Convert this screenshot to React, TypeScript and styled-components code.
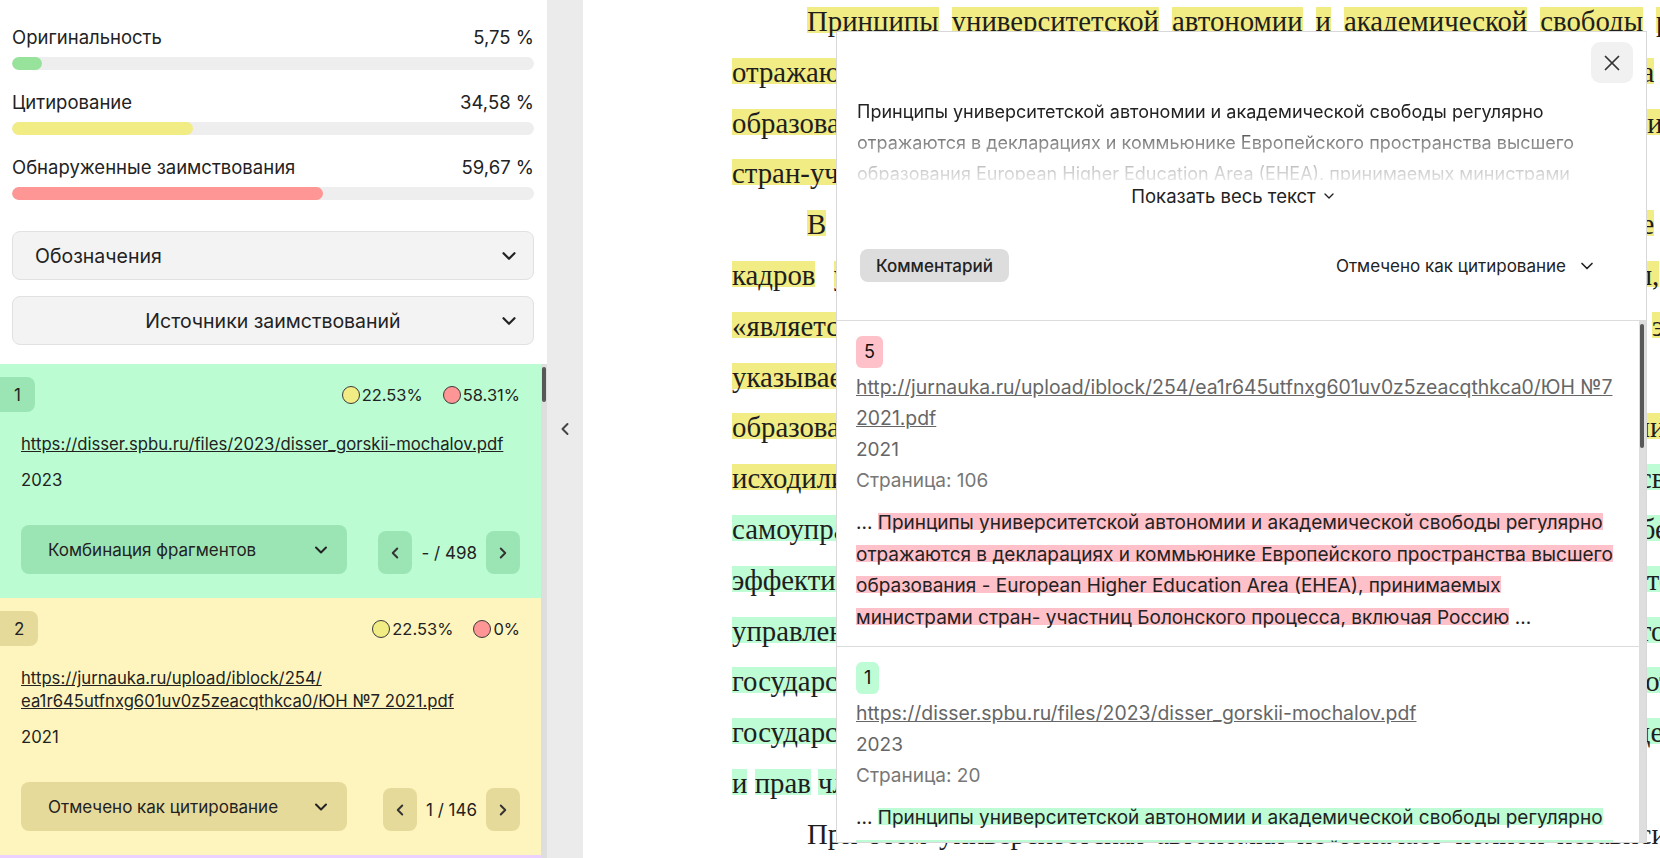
import React from "react";
import styled, { createGlobalStyle } from "styled-components";
import { ChevronDown, ChevronLeft, ChevronRight, X } from "lucide-react";

const GlobalStyle = createGlobalStyle`
  * { box-sizing: border-box; }
  html, body { margin: 0; padding: 0; }
  body {
    font-family: Inter, "Noto Sans", sans-serif;
    color: #222;
    background: #fff;
    overflow: hidden;
  }
`;

const colors = {
  yellow: "#f2ec84",
  green: "#bdfcd4",
  pink: "#ffc1c9",
  red: "#ff9696",
  greenBar: "#98e39b",
};

const Page = styled.div`
  display: flex;
  width: 1660px;
  height: 858px;
  overflow: hidden;
`;

/* ---------- sidebar ---------- */

const Sidebar = styled.aside`
  width: 547px;
  flex: none;
  display: flex;
  flex-direction: column;
  background: #fff;
`;

const Summary = styled.div`
  padding: 25px 13px 0 12px;
`;

const Stats = styled.div`
  display: flex;
  flex-direction: column;
  gap: 20px;
`;

const StatHead = styled.div`
  display: flex;
  justify-content: space-between;
  font-size: 18.5px;
  line-height: 24px;
  margin-bottom: 8px;
`;

const Track = styled.div`
  height: 13px;
  border-radius: 7px;
  background: #eeeeee;
  overflow: hidden;
`;

const Fill = styled.div<{ $color: string }>`
  height: 100%;
  border-radius: 7px;
  background: ${(p) => p.$color};
`;

const Select = styled.div<{ $center?: boolean; $gap: number }>`
  height: 49px;
  margin-top: ${(p) => p.$gap}px;
  display: flex;
  align-items: center;
  border: 1px solid #e1e1e1;
  border-radius: 8px;
  background: #f3f3f3;
  padding: ${(p) => (p.$center ? "0 13px 0 35px" : "0 13px 0 22px")};
  font-size: 19.5px;
  color: #222;
`;

const SelectLabel = styled.span<{ $center?: boolean }>`
  flex: 1;
  text-align: ${(p) => (p.$center ? "center" : "left")};
`;

const CardsArea = styled.div`
  flex: 1;
  min-height: 0;
  margin-top: 19px;
  display: flex;
`;

const CardList = styled.div`
  flex: 1;
  overflow: hidden;
`;

const ScrollTrack = styled.div<{ $w: number }>`
  width: ${(p) => p.$w}px;
  flex: none;
  background: #dedede;
`;

const ScrollThumb = styled.div<{ $h: number }>`
  width: 4px;
  height: ${(p) => p.$h}px;
  margin: 3px 0 0 1px;
  border-radius: 2px;
  background: #585858;
`;

const Card = styled.div<{ $bg: string }>`
  background: ${(p) => p.$bg};
  padding: 13px 21px 24px 21px;
`;

const CardTop = styled.div`
  display: flex;
  align-items: center;
  justify-content: space-between;
`;

const Badge = styled.div<{ $bg: string }>`
  height: 35px;
  margin-left: -21px;
  padding: 0 14px;
  display: flex;
  align-items: center;
  border-radius: 0 8px 8px 0;
  background: ${(p) => p.$bg};
  font-size: 17px;
`;

const Shares = styled.div`
  display: flex;
  gap: 20px;
  font-size: 16.5px;
`;

const Share = styled.span`
  display: flex;
  align-items: center;
  gap: 2px;
`;

const Dot = styled.i<{ $color: string }>`
  width: 18px;
  height: 18px;
  border-radius: 50%;
  border: 1px solid #3a3a3a;
  background: ${(p) => p.$color};
`;

const CardLink = styled.a`
  display: block;
  margin-top: 21px;
  font-size: 16.7px;
  line-height: 23px;
  color: #222;
  text-decoration: underline;
`;

const CardYear = styled.div`
  margin-top: 13px;
  font-size: 16.7px;
  line-height: 22px;
`;

const CardBottom = styled.div`
  margin-top: 34px;
  display: flex;
  align-items: flex-end;
  justify-content: space-between;
`;

const CardSelect = styled.div<{ $bg: string }>`
  width: 326px;
  height: 49px;
  display: flex;
  align-items: center;
  justify-content: space-between;
  padding: 0 16px 0 27px;
  border-radius: 8px;
  background: ${(p) => p.$bg};
  font-size: 17px;
`;

const Pager = styled.div`
  display: flex;
  align-items: center;
  gap: 9px;
  font-size: 17px;
`;

const PageBtn = styled.div<{ $bg: string }>`
  width: 34px;
  height: 43px;
  display: grid;
  place-items: center;
  border-radius: 8px;
  background: ${(p) => p.$bg};
  color: #333;
`;

/* ---------- divider ---------- */

const Divider = styled.div`
  width: 36px;
  flex: none;
  background: #ebebeb;
  display: flex;
  align-items: center;
  justify-content: center;
  color: #444;
`;

/* ---------- document ---------- */

const Doc = styled.main`
  position: relative;
  flex: 1;
  overflow: hidden;
  background: #fff;
`;

const DocText = styled.div`
  width: 1048px;
  margin: -4px 0 0 149px;
  font-family: "Liberation Serif", "Times New Roman", serif;
  font-size: 28.8px;
  color: #1e1e1e;
`;

const DocLine = styled.div<{ $indent?: boolean; $last?: boolean }>`
  height: 50.8px;
  line-height: 50.8px;
  text-align: justify;
  text-align-last: ${(p) => (p.$last ? "left" : "justify")};
  text-indent: ${(p) => (p.$indent ? "75px" : "0")};
`;

const Mark = styled.span<{ $c: string }>`
  background: linear-gradient(
    to bottom,
    transparent 2px,
    ${(p) => p.$c} 2px,
    ${(p) => p.$c} calc(100% - 4px),
    transparent calc(100% - 4px)
  );
`;

/* ---------- popup ---------- */

const Popup = styled.div`
  position: absolute;
  left: 253px;
  top: 31px;
  width: 811px;
  height: 812px;
  background: #fff;
  border: 1px solid #d8d8d8;
  display: flex;
  flex-direction: column;
  overflow: hidden;
  color: #222;
`;

const PopupHead = styled.div`
  padding: 10px 13px 38px 20px;
  border-bottom: 1px solid #dcdcdc;
  flex: none;
`;

const CloseRow = styled.div`
  display: flex;
  justify-content: flex-end;
`;

const CloseBtn = styled.div`
  width: 42px;
  height: 41px;
  display: grid;
  place-items: center;
  border-radius: 9px;
  background: #f1f1f1;
  color: #333;
`;

const Fragment = styled.p`
  margin: 13px 0 0;
  height: 84px;
  overflow: hidden;
  font-size: 18px;
  line-height: 31px;
  white-space: nowrap;
  -webkit-mask-image: linear-gradient(
    to bottom,
    #000 0,
    #000 30px,
    rgba(0, 0, 0, 0.55) 46px,
    rgba(0, 0, 0, 0.12) 84px
  );
`;

const ShowMore = styled.div`
  margin-top: 4px;
  padding-right: 22px;
  display: flex;
  align-items: center;
  justify-content: center;
  gap: 5px;
  font-size: 18.5px;
  line-height: 24px;
`;

const Actions = styled.div`
  margin-top: 41px;
  display: flex;
  align-items: center;
  justify-content: space-between;
`;

const Chip = styled.div`
  height: 33px;
  margin-left: 3px;
  padding: 0 16px;
  display: flex;
  align-items: center;
  border-radius: 8px;
  background: #dddddd;
  font-size: 17px;
  font-weight: 500;
`;

const Mode = styled.div`
  display: flex;
  align-items: center;
  gap: 11px;
  margin-right: 36px;
  font-size: 17px;
`;

const Sources = styled.div`
  flex: 1;
  min-height: 0;
  display: flex;
`;

const SourceList = styled.div`
  flex: 1;
  overflow: hidden;
`;

const Source = styled.div`
  padding: 15px 14px 13px 19px;
  border-bottom: 1px solid #dcdcdc;
  font-size: 19px;
  line-height: 31px;
`;

const SourceBadge = styled.span<{ $bg: string }>`
  display: inline-flex;
  align-items: center;
  height: 32px;
  padding: 0 8px;
  border-radius: 6px;
  background: ${(p) => p.$bg};
  color: #111;
  font-size: 18px;
  line-height: 1;
`;

const SourceLink = styled.a`
  display: block;
  margin-top: 4px;
  font-size: 19.4px;
  color: #666;
  text-decoration: underline;
`;

const Meta = styled.div<{ $c: string }>`
  color: ${(p) => p.$c};
`;

const Excerpt = styled.div`
  margin-top: 11px;
  line-height: 31.5px;
  color: #222;
  white-space: nowrap;
`;

/* ---------- data ---------- */

type Seg = { c?: string; t: string };
type Line = { segs: Seg[]; indent?: boolean; last?: boolean };

const Y = colors.yellow;
const G = colors.green;

const lines: Line[] = [
  { indent: true, segs: [{ c: Y, t: "Принципы университетской автономии и академической свободы регулярно" }] },
  { segs: [{ c: Y, t: "отражаются в декларациях и коммюнике Европейского пространства высшего" }] },
  { segs: [{ c: Y, t: "образования European Higher Education Area (EHEA), принимаемых министрами" }] },
  { last: true, segs: [{ c: Y, t: "стран-участниц Болонского процесса, включая Россию." }] },
  { indent: true, segs: [{ c: Y, t: "В Российской Федерации академическая свобода в подготовке научных" }] },
  { segs: [{ c: Y, t: "кадров университеты рассматривают как основополагающий принцип, который" }] },
  { segs: [{ c: Y, t: "«является необходимым условием развития науки и образования», как это прямо" }] },
  { segs: [{ c: Y, t: "указывает законодатель. Ряд авторов, анализируя опыт реформ высшего" }] },
  { segs: [{ c: Y, t: "образования, приходят к выводу, что реформаторы системы управления вузами" }] },
  { segs: [{ c: Y, t: "исходили из необходимости сочетания принципов академической" }, { c: G, t: "свободы и" }] },
  { segs: [{ c: G, t: "самоуправления с требованиями государственного контроля и обеспечения" }] },
  { segs: [{ c: G, t: "эффективности деятельности вузов. В литературе подчеркивается, что модель" }] },
  { segs: [{ c: G, t: "управления высшим образованием в России сочетает элементы автономии и" }] },
  { segs: [{ c: G, t: "государственного регулирования, при этом вузы остаются подотчетными" }] },
  { segs: [{ c: G, t: "государству как учредителю и обязаны соблюдать гарантии академической" }] },
  { last: true, segs: [{ c: G, t: "и прав членов университетского сообщества." }] },
  { indent: true, segs: [{ t: "При этом университетская автономия не означает полной независимости от" }] },
];

const renderLine = (segs: Seg[]) => {
  const words = segs.flatMap((s) => s.t.split(" ").map((w) => ({ w, c: s.c })));
  return words.map((x, i) => (
    <React.Fragment key={i}>
      {i > 0 && " "}
      {x.c ? <Mark $c={x.c}>{x.w}</Mark> : x.w}
    </React.Fragment>
  ));
};

const stats = [
  { label: "Оригинальность", value: "5,75 %", pct: 5.75, color: colors.greenBar },
  { label: "Цитирование", value: "34,58 %", pct: 34.58, color: colors.yellow },
  { label: "Обнаруженные заимствования", value: "59,67 %", pct: 59.67, color: colors.red },
];

type CardData = {
  n: number;
  bg: string;
  dark: string;
  cite: string;
  borrow: string;
  link: React.ReactNode;
  year: string;
  mode: string;
  page: string;
};

const cards: CardData[] = [
  {
    n: 1,
    bg: "#bbfcd3",
    dark: "#9be5b5",
    cite: "22.53%",
    borrow: "58.31%",
    link: "https://disser.spbu.ru/files/2023/disser_gorskii-mochalov.pdf",
    year: "2023",
    mode: "Комбинация фрагментов",
    page: "- / 498",
  },
  {
    n: 2,
    bg: "#fef5be",
    dark: "#e6da9b",
    cite: "22.53%",
    borrow: "0%",
    link: (
      <>
        https://jurnauka.ru/upload/iblock/254/
        <wbr />
        ea1r645utfnxg601uv0z5zeacqthkca0/ЮН №7 2021.pdf
      </>
    ),
    year: "2021",
    mode: "Отмечено как цитирование",
    page: "1 / 146",
  },
];

const SourceCard = ({ d }: { d: CardData }) => (
  <Card $bg={d.bg}>
    <CardTop>
      <Badge $bg={d.dark}>{d.n}</Badge>
      <Shares>
        <Share>
          <Dot $color={colors.yellow} />
          {d.cite}
        </Share>
        <Share>
          <Dot $color={colors.red} />
          {d.borrow}
        </Share>
      </Shares>
    </CardTop>
    <CardLink>{d.link}</CardLink>
    <CardYear>{d.year}</CardYear>
    <CardBottom>
      <CardSelect $bg={d.dark}>
        {d.mode}
        <ChevronDown size={20} strokeWidth={2.4} />
      </CardSelect>
      <Pager>
        <PageBtn $bg={d.dark}>
          <ChevronLeft size={18} strokeWidth={2.6} />
        </PageBtn>
        {d.page}
        <PageBtn $bg={d.dark}>
          <ChevronRight size={18} strokeWidth={2.6} />
        </PageBtn>
      </Pager>
    </CardBottom>
  </Card>
);

const App = () => {
  return (
    <Page>
      <GlobalStyle />
      <Sidebar>
        <Summary>
          <Stats>
            {stats.map((s) => (
              <div key={s.label}>
                <StatHead>
                  <span>{s.label}</span>
                  <span>{s.value}</span>
                </StatHead>
                <Track>
                  <Fill $color={s.color} style={{ width: `${s.pct}%` }} />
                </Track>
              </div>
            ))}
          </Stats>
          <Select $gap={31}>
            <SelectLabel>Обозначения</SelectLabel>
            <ChevronDown size={22} strokeWidth={2.4} />
          </Select>
          <Select $gap={16} $center>
            <SelectLabel $center>Источники заимствований</SelectLabel>
            <ChevronDown size={22} strokeWidth={2.4} />
          </Select>
        </Summary>
        <CardsArea>
          <CardList>
            {cards.map((c) => (
              <SourceCard key={c.n} d={c} />
            ))}
            <Card $bg="#ecd0fd" />
          </CardList>
          <ScrollTrack $w={6}>
            <ScrollThumb $h={35} />
          </ScrollTrack>
        </CardsArea>
      </Sidebar>

      <Divider>
        <ChevronLeft size={20} strokeWidth={2.4} />
      </Divider>

      <Doc>
        <DocText>
          {lines.map((l, i) => (
            <DocLine key={i} $indent={l.indent} $last={l.last}>
              {renderLine(l.segs)}
            </DocLine>
          ))}
        </DocText>

        <Popup>
          <PopupHead>
            <CloseRow>
              <CloseBtn>
                <X size={26} strokeWidth={1.6} />
              </CloseBtn>
            </CloseRow>
            <Fragment>
              Принципы университетской автономии и академической свободы регулярно
              <br />
              отражаются в декларациях и коммьюнике Европейского пространства высшего
              <br />
              образования European Higher Education Area (EHEA), принимаемых министрами
            </Fragment>
            <ShowMore>
              Показать весь текст
              <ChevronDown size={16} strokeWidth={2} />
            </ShowMore>
            <Actions>
              <Chip>Комментарий</Chip>
              <Mode>
                Отмечено как цитирование
                <ChevronDown size={20} strokeWidth={2} />
              </Mode>
            </Actions>
          </PopupHead>

          <Sources>
            <SourceList>
              <Source>
                <SourceBadge $bg={colors.pink}>5</SourceBadge>
                <SourceLink>
                  http://jurnauka.ru/upload/iblock/254/ea1r645utfnxg601uv0z5zeacqthkca0/ЮН №7 2021.pdf
                </SourceLink>
                <Meta $c="#666">2021</Meta>
                <Meta $c="#777">Страница: 106</Meta>
                <Excerpt>
                  ... <Mark $c={colors.pink}>Принципы университетской автономии и академической свободы регулярно</Mark>
                  <br />
                  <Mark $c={colors.pink}>отражаются в декларациях и коммьюнике Европейского пространства высшего</Mark>
                  <br />
                  <Mark $c={colors.pink}>образования - European Higher Education Area (EHEA), принимаемых</Mark>
                  <br />
                  <Mark $c={colors.pink}>министрами стран- участниц Болонского процесса, включая Россию</Mark> ...
                </Excerpt>
              </Source>
              <Source>
                <SourceBadge $bg={colors.green}>1</SourceBadge>
                <SourceLink>https://disser.spbu.ru/files/2023/disser_gorskii-mochalov.pdf</SourceLink>
                <Meta $c="#666">2023</Meta>
                <Meta $c="#777">Страница: 20</Meta>
                <Excerpt>
                  ... <Mark $c={colors.green}>Принципы университетской автономии и академической свободы регулярно</Mark>
                  <br />
                  <Mark $c={colors.green}>отражаются в декларациях и коммьюнике Европейского пространства высшего</Mark>
                  <br />
                  <Mark $c={colors.green}>образования - European Higher Education Area (EHEA), принимаемых</Mark>
                </Excerpt>
              </Source>
            </SourceList>
            <ScrollTrack $w={7}>
              <ScrollThumb $h={124} />
            </ScrollTrack>
          </Sources>
        </Popup>
      </Doc>
    </Page>
  );
};

export default App;
